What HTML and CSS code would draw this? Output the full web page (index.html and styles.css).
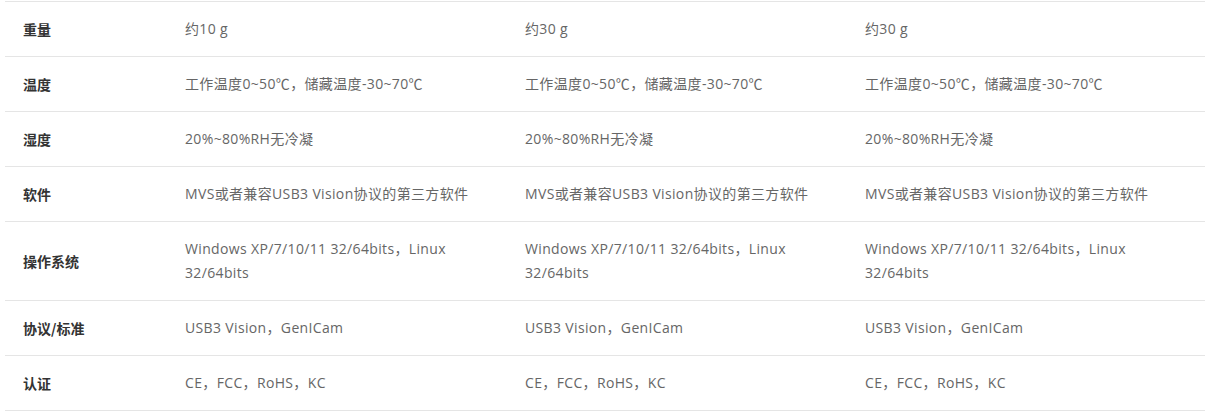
FILE: index.html
```html
<!DOCTYPE html>
<html lang="zh-CN">
<head>
<meta charset="utf-8">
<link rel="stylesheet" href="styles.css">
</head>
<body>
<div class="spec">
  <div class="row"><div class="label">重量</div><div class="cell">约10 g</div><div class="cell">约30 g</div><div class="cell">约30 g</div></div>
  <div class="row"><div class="label">温度</div><div class="cell">工作温度0~50℃，储藏温度-30~70℃</div><div class="cell">工作温度0~50℃，储藏温度-30~70℃</div><div class="cell">工作温度0~50℃，储藏温度-30~70℃</div></div>
  <div class="row"><div class="label">湿度</div><div class="cell">20%~80%RH无冷凝</div><div class="cell">20%~80%RH无冷凝</div><div class="cell">20%~80%RH无冷凝</div></div>
  <div class="row"><div class="label">软件</div><div class="cell">MVS或者兼容USB3 Vision协议的第三方软件</div><div class="cell">MVS或者兼容USB3 Vision协议的第三方软件</div><div class="cell">MVS或者兼容USB3 Vision协议的第三方软件</div></div>
  <div class="row"><div class="label">操作系统</div><div class="cell">Windows XP/7/10/11 32/64bits，Linux 32/64bits</div><div class="cell">Windows XP/7/10/11 32/64bits，Linux 32/64bits</div><div class="cell">Windows XP/7/10/11 32/64bits，Linux 32/64bits</div></div>
  <div class="row"><div class="label">协议/标准</div><div class="cell">USB3 Vision，GenICam</div><div class="cell">USB3 Vision，GenICam</div><div class="cell">USB3 Vision，GenICam</div></div>
  <div class="row"><div class="label">认证</div><div class="cell">CE，FCC，RoHS，KC</div><div class="cell">CE，FCC，RoHS，KC</div><div class="cell">CE，FCC，RoHS，KC</div></div>
</div>
</body>
</html>
```
FILE: styles.css
```css
html, body {
  margin: 0;
  padding: 0;
  background: #fff;
}
body {
  font-family: "Open Sans", "Noto Sans CJK SC", sans-serif;
  font-size: 14px;
  color: #666;
}
.spec {
  width: 1200px;
  margin: 1px 0 0 5px;
  border-top: 1px solid #e5e5e5;
}
.row {
  display: grid;
  grid-template-columns: 162px 340px 340px 1fr;
  border-bottom: 1px solid #e5e5e5;
}
.label, .cell {
  padding: 15px 18px;
  line-height: 24px;
  display: flex;
  align-items: center;
}
.label {
  font-weight: bold;
  color: #333;
  font-family: "Noto Sans CJK SC", sans-serif;
}
.cell {
  padding-right: 30px;
  letter-spacing: 0.35px;
}
```
